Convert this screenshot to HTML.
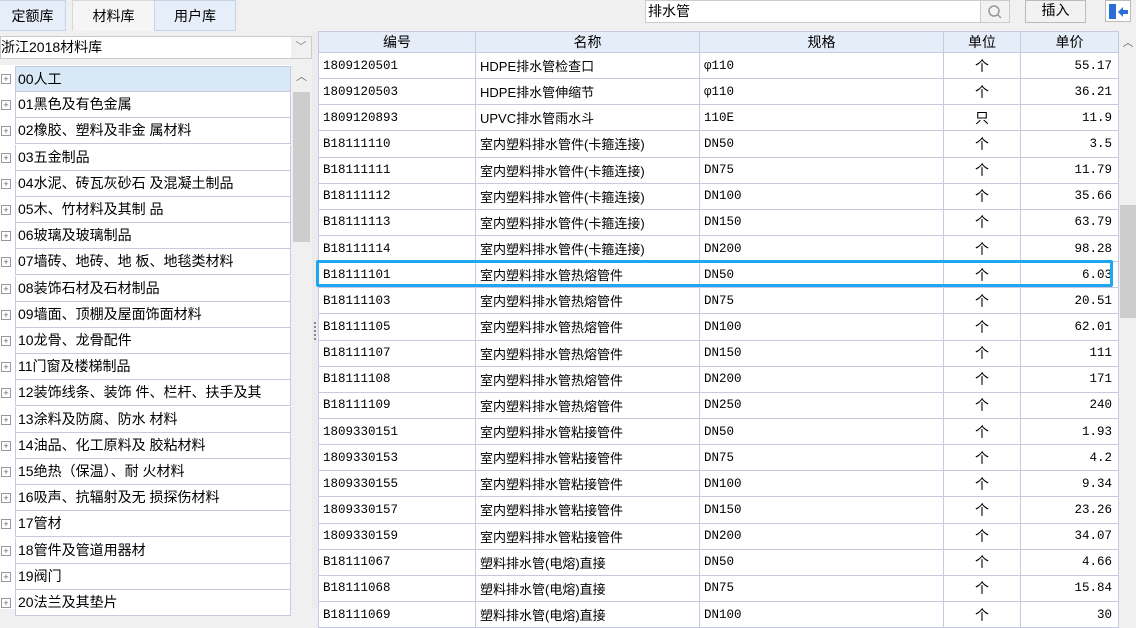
<!DOCTYPE html>
<html><head><meta charset="utf-8"><style>
*{margin:0;padding:0;box-sizing:border-box}
body{width:1136px;height:609px;overflow:hidden;background:#f0f0f0;font-family:"Liberation Sans","Noto Sans CJK SC",sans-serif;font-size:14px;color:#000;position:relative}
.a{position:absolute}
.tab{position:absolute;top:0;height:31px;border:1px solid #c5d3e6;background:#e6eef9;text-align:center;line-height:30px;font-size:14px}
.tr{position:absolute;left:15px;width:276px;height:26px;border:1px solid #c8c8e2;border-top:none;background:#fff;line-height:25px;padding-left:2px;font-size:14px;white-space:nowrap}
.pl{position:absolute;left:1px;width:10px;height:10px;border:1px solid #999;font-size:9px;line-height:8px;text-align:center;color:#666}
table{border-collapse:collapse;position:absolute;left:318px;top:31px;table-layout:fixed}
td,th{border:1px solid #c8c8e2;height:26.15px;white-space:nowrap;overflow:hidden;font-size:13px}
th{background:#e5edf8;font-weight:normal;font-size:14px;height:21px}
td{background:#fff;padding:0 4px}
td.m{font-family:"Liberation Mono","Noto Sans CJK SC",monospace;font-size:12.5px}
td.c{text-align:center;font-size:14px}
td.r{text-align:right;font-family:"Liberation Mono",monospace;font-size:12.5px;padding-right:6px}
</style></head><body>
<div class="tab" style="left:-1px;width:67px">定额库</div>
<div class="tab" style="left:72px;width:83px;background:#f5f5f5;border-color:#d8d8d8;border-bottom:none">材料库</div>
<div class="tab" style="left:154px;width:82px">用户库</div>
<div class="a" style="left:645px;top:0;width:336px;height:23px;background:#fff;border:1px solid #ccc;padding-left:2px;line-height:20px">排水管</div>
<div class="a" style="left:980px;top:0;width:30px;height:23px;background:#f2f2f2;border:1px solid #ccc"><svg width="28" height="22"><circle cx="13" cy="10" r="5" fill="none" stroke="#999" stroke-width="1.5"/><line x1="17" y1="14" x2="20" y2="17" stroke="#999" stroke-width="1.5"/></svg></div>
<div class="a" style="left:1025px;top:0;width:61px;height:23px;background:#f2f2f2;border:1px solid #bbb;text-align:center;line-height:18px">插入</div>
<div class="a" style="left:1105px;top:0;width:26px;height:22px;background:#fff;border:1px solid #bbb"><div class="a" style="left:3px;top:3px;width:7px;height:15px;background:#2a6fd6"></div><svg class="a" style="left:11px;top:4px" width="12" height="14"><path d="M1 7 L6 2 L6 5 L11 5 L11 9 L6 9 L6 12Z" fill="#2a6fd6"/></svg></div>
<div class="a" style="left:0;top:36px;width:312px;height:23px;background:#fff;border:1px solid #ccc;line-height:20px">浙江2018材料库</div>
<div class="a" style="left:291px;top:37px;width:20px;height:21px;background:#f0f0f0;color:#888;text-align:center;font-size:11px;line-height:21px">﹀</div>
<div class="a" style="left:0;top:65px;width:312px;height:544px;background:#fff"></div>
<div class="a" style="left:291px;top:65px;width:21px;height:544px;background:#f0f0f0"></div>
<div class="a" style="left:293px;top:92px;width:17px;height:150px;background:#cdcdcd"></div>
<div class="a" style="left:293px;top:68px;width:17px;height:20px;color:#666;text-align:center;font-size:11px">︿</div>
<div class="a" style="left:312px;top:31px;width:6px;height:578px;background:#ececec"></div>
<div class="a" style="left:1118px;top:31px;width:18px;height:578px;background:#f0f0f0"></div>
<div class="a" style="left:1120px;top:205px;width:16px;height:113px;background:#cdcdcd"></div>
<div class="a" style="left:1120px;top:34px;width:16px;height:16px;color:#666;text-align:center;font-size:11px">︿</div>
<div id="tree"></div>
<script>
var t=["00人工","01黑色及有色金属","02橡胶、塑料及非金 属材料","03五金制品","04水泥、砖瓦灰砂石 及混凝土制品","05木、竹材料及其制 品","06玻璃及玻璃制品","07墙砖、地砖、地 板、地毯类材料","08装饰石材及石材制品","09墙面、顶棚及屋面饰面材料","10龙骨、龙骨配件","11门窗及楼梯制品","12装饰线条、装饰 件、栏杆、扶手及其","13涂料及防腐、防水 材料","14油品、化工原料及 胶粘材料","15绝热（保温）、耐 火材料","16吸声、抗辐射及无 损探伤材料","17管材","18管件及管道用器材","19阀门","20法兰及其垫片"];
var h="";for(var i=0;i<t.length;i++){var y=66+i*26.2;h+='<div class="tr" style="top:'+y+'px;'+(i==0?'background:#d9e8f7;border-top:1px solid #c8c8e2':'')+'">'+t[i]+'</div><div class="pl" style="top:'+(y+8)+'px">+</div>';}
document.getElementById("tree").innerHTML=h;
</script>
<table>
<colgroup><col style="width:157px"><col style="width:224px"><col style="width:244px"><col style="width:77px"><col style="width:98px"></colgroup>
<tr><th>编号</th><th>名称</th><th>规格</th><th>单位</th><th>单价</th></tr>
<tbody id="tb"></tbody></table>
<script>
var r=[["1809120501","HDPE排水管检查口","φ110","个","55.17"],["1809120503","HDPE排水管伸缩节","φ110","个","36.21"],["1809120893","UPVC排水管雨水斗","110E","只","11.9"],["B18111110","室内塑料排水管件(卡箍连接)","DN50","个","3.5"],["B18111111","室内塑料排水管件(卡箍连接)","DN75","个","11.79"],["B18111112","室内塑料排水管件(卡箍连接)","DN100","个","35.66"],["B18111113","室内塑料排水管件(卡箍连接)","DN150","个","63.79"],["B18111114","室内塑料排水管件(卡箍连接)","DN200","个","98.28"],["B18111101","室内塑料排水管热熔管件","DN50","个","6.03"],["B18111103","室内塑料排水管热熔管件","DN75","个","20.51"],["B18111105","室内塑料排水管热熔管件","DN100","个","62.01"],["B18111107","室内塑料排水管热熔管件","DN150","个","111"],["B18111108","室内塑料排水管热熔管件","DN200","个","171"],["B18111109","室内塑料排水管热熔管件","DN250","个","240"],["1809330151","室内塑料排水管粘接管件","DN50","个","1.93"],["1809330153","室内塑料排水管粘接管件","DN75","个","4.2"],["1809330155","室内塑料排水管粘接管件","DN100","个","9.34"],["1809330157","室内塑料排水管粘接管件","DN150","个","23.26"],["1809330159","室内塑料排水管粘接管件","DN200","个","34.07"],["B18111067","塑料排水管(电熔)直接","DN50","个","4.66"],["B18111068","塑料排水管(电熔)直接","DN75","个","15.84"],["B18111069","塑料排水管(电熔)直接","DN100","个","30"]];
var h="";for(var i=0;i<r.length;i++){var x=r[i];h+='<tr><td class="m">'+x[0]+'</td><td>'+x[1]+'</td><td class="m">'+x[2]+'</td><td class="c">'+x[3]+'</td><td class="r">'+x[4]+'</td></tr>';}
document.getElementById("tb").innerHTML=h;
</script>
<div class="a" style="left:316px;top:260px;width:797px;height:27px;border:3px solid #1ea7f0;border-radius:2px"></div>
<div class="a" style="left:314px;top:322px;width:2px;height:18px;border-left:2px dotted #888"></div>
</body></html>
